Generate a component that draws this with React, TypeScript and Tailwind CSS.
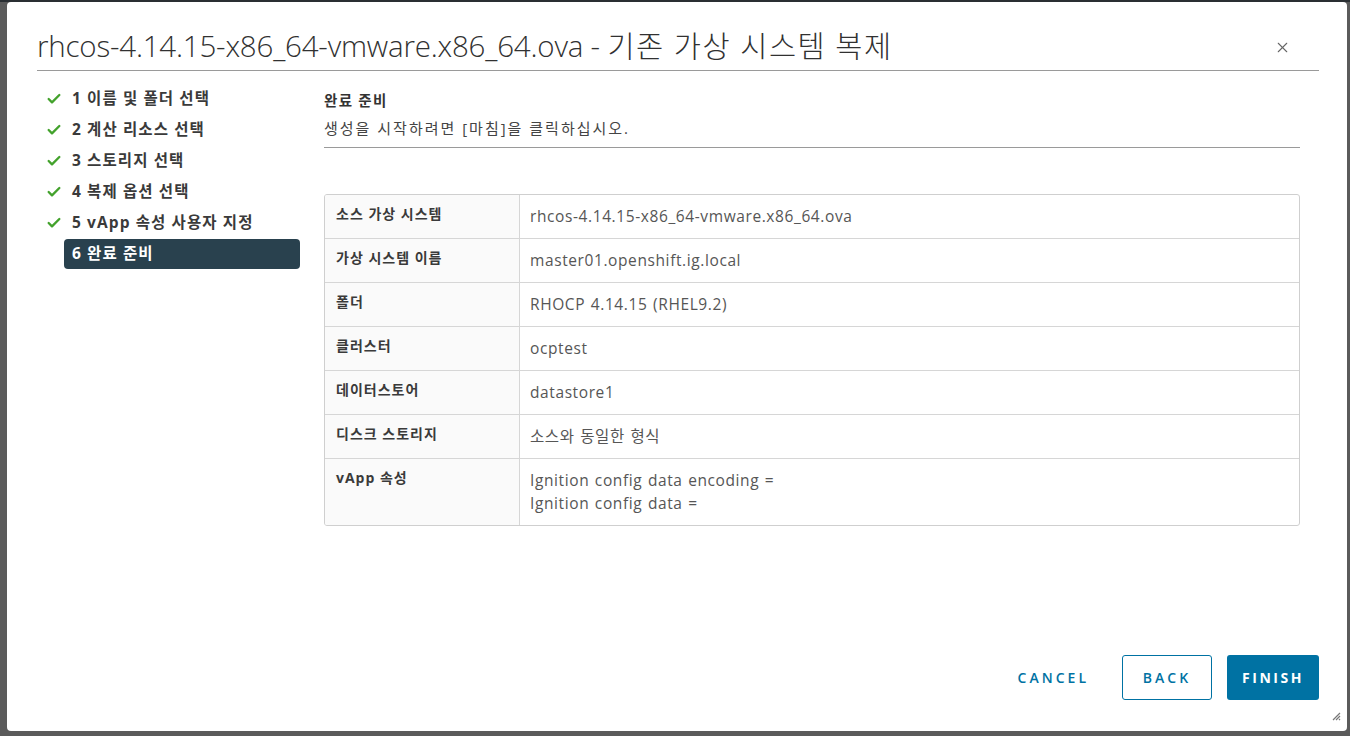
import { Check, X } from 'lucide-react';

const steps = [
  '1 이름 및 폴더 선택',
  '2 계산 리소스 선택',
  '3 스토리지 선택',
  '4 복제 옵션 선택',
  '5 vApp 속성 사용자 지정',
  '6 완료 준비',
];

const rows: [string, string[]][] = [
  ['소스 가상 시스템', ['rhcos-4.14.15-x86_64-vmware.x86_64.ova']],
  ['가상 시스템 이름', ['master01.openshift.ig.local']],
  ['폴더', ['RHOCP 4.14.15 (RHEL9.2)']],
  ['클러스터', ['ocptest']],
  ['데이터스토어', ['datastore1']],
  ['디스크 스토리지', ['소스와 동일한 형식']],
  ['vApp 속성', ['Ignition config data encoding =', 'Ignition config data =']],
];

const font = { fontFamily: '"Open Sans", "Noto Sans CJK KR", sans-serif' };

export default function App() {
  return (
    <div className="h-[736px] w-full overflow-hidden bg-[#5b5b5b] border-t-2 border-[#2a2f33] pl-[7px] pr-[3px] pb-[5px]" style={font}>
      <div className="h-full w-full bg-white rounded-[4px] flex flex-col relative">
        {/* header */}
        <div className="ml-[30px] mr-[28px] flex items-center justify-between border-b border-[#9a9a9a] pt-[26px] pb-[7px]">
          <h1 className="text-[29.5px] leading-[35px] font-light text-[#313131] tracking-[-0.2px] whitespace-nowrap">
            rhcos-4.14.15-x86_64-vmware.x86_64.ova - <span className="tracking-[1.5px]">기존 가상 시스템 복제</span>
          </h1>
          <X className="w-[17px] h-[17px] text-[#666] mr-[28px] mt-[4px]" strokeWidth={1.5} />
        </div>

        <div className="flex flex-1 pl-[30px] pr-[47px]">
          {/* steps */}
          <div className="w-[263px] pt-[12px] flex flex-col">
            {steps.map((s, i) => {
              const active = i === steps.length - 1;
              return (
                <div key={s} className="flex h-[31px] items-center">
                  <div className="w-[27px] pl-[9px] flex items-center">
                    {!active && <Check className="w-[16px] h-[16px] text-[#43a22c]" strokeWidth={3.5} />}
                  </div>
                  <div className={`flex-1 h-[30px] flex items-center px-[8px] rounded-[4px] text-[15.5px] tracking-[1.1px] font-bold whitespace-nowrap ${active ? 'bg-[#29414e] text-white' : 'text-[#3a3a3a]'}`}>
                    {s}
                  </div>
                </div>
              );
            })}
          </div>

          {/* content */}
          <div className="flex-1 ml-[24px] pt-[20px]">
            <div className="text-[14.5px] font-bold text-[#333] leading-[20px] tracking-[1.3px]">완료 준비</div>
            <div className="text-[15px] text-[#444] leading-[20px] mt-[7px] tracking-[2px]">생성을 시작하려면 [마침]을 클릭하십시오.</div>
            <div className="border-b border-[#9a9a9a] mt-[9px]" />

            <div className="mt-[46px] border border-[#cfcfcf] rounded-[3px] overflow-hidden">
              {rows.map(([k, v], i) => (
                <div key={k} className={`grid grid-cols-[195px_1fr] ${i < rows.length - 1 ? 'border-b border-[#d6d6d6]' : ''}`}>
                  <div className="bg-[#fafafa] border-r border-[#d6d6d6] px-[11px] py-[10px] text-[14px] leading-[18px] font-bold text-[#3a3a3a] tracking-[1px]">
                    {k}
                  </div>
                  <div className="px-[10px] py-[10px] text-[15.5px] leading-[23px] text-[#565656] tracking-[0.6px] [word-spacing:1px]">
                    {v.map((line) => (
                      <div key={line}>{line}</div>
                    ))}
                  </div>
                </div>
              ))}
            </div>
          </div>
        </div>

        {/* footer */}
        <div className="flex justify-end items-center gap-[15px] pr-[28px] pb-[31px]">
          <button className="h-[45px] px-[16px] text-[14px] font-semibold tracking-[3px] text-[#0072a3] mr-[2px]">CANCEL</button>
          <button className="h-[45px] w-[90px] border border-[#0072a3] rounded-[3px] text-[14px] font-semibold tracking-[3px] text-[#0072a3]">BACK</button>
          <button className="h-[45px] w-[92px] bg-[#0072a3] rounded-[3px] text-[14px] font-bold tracking-[2.5px] text-white">FINISH</button>
        </div>

        <svg className="absolute right-[6px] bottom-[10px]" width="9" height="9" viewBox="0 0 9 9">
          <path d="M8 1 L1 8 M8 4 L4 8 M8 7 L7 8" stroke="#777" strokeWidth="1.2" />
        </svg>
      </div>
    </div>
  );
}
